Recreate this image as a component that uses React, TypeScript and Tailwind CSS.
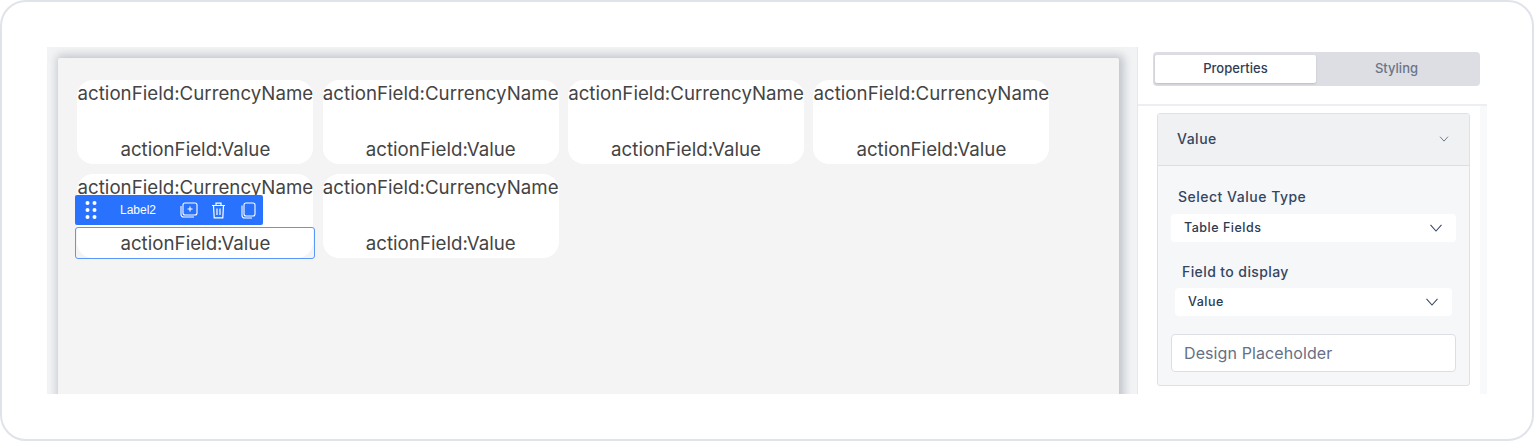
import React from "react";

const poppins = "font-['Inter','Liberation_Sans',sans-serif]";

function Chev({ size = 14, cls = "" }: { size?: number; cls?: string }) {
  return (
    <svg width={size} height={size} viewBox="0 0 14 14" fill="none" stroke="currentColor" strokeWidth="1.1" className={cls}>
      <path d="M1.5 3.8 7 10 12.5 3.8" />
    </svg>
  );
}

function Card() {
  return (
    <div className="w-[236px] h-[84px] bg-white rounded-[16px] flex flex-col justify-between items-center text-[#444] text-[18.7px] leading-[27px] tracking-[0.02px] whitespace-nowrap pb-[1px]">
      <div className="h-[27px]">actionField:CurrencyName</div>
      <div className="h-[27px]">actionField:Value</div>
    </div>
  );
}

function Toolbar() {
  return (
    <div className="absolute left-[17px] top-[137px] w-[188px] h-[30px] bg-[#2972fe] rounded-[2px] text-white flex items-center">
      <svg width="12" height="20" viewBox="0 0 12 20" fill="white" className="ml-[10px]">
        <circle cx="2.5" cy="3" r="2" /><circle cx="9.5" cy="3" r="2" />
        <circle cx="2.5" cy="10" r="2" /><circle cx="9.5" cy="10" r="2" />
        <circle cx="2.5" cy="17" r="2" /><circle cx="9.5" cy="17" r="2" />
      </svg>
      <span className="ml-[23px] text-[12px] leading-none w-[60px] font-['Liberation_Sans',sans-serif]">Label2</span>
      <svg width="18" height="16" viewBox="0 0 18 16" fill="none" stroke="white" strokeWidth="1.1">
        <rect x="3" y="1" width="14" height="12" rx="2" />
        <path d="M1 4v8.5A2.5 2.5 0 0 0 3.5 15H14" />
        <path d="M10 4.5v5M7.5 7h5" />
      </svg>
      <svg width="15" height="17" viewBox="0 0 15 17" fill="none" stroke="white" strokeWidth="1.2" className="ml-[13px]">
        <path d="M1 3.5h13M5 3.5V1.2h5v2.3M2.5 3.5l.7 12.3h8.6l.7-12.3M6 6.5v6.5M9 6.5v6.5" />
      </svg>
      <svg width="15" height="17" viewBox="0 0 15 17" fill="none" stroke="white" strokeWidth="1.1" className="ml-[15px]">
        <rect x="3" y="1" width="11" height="13" rx="2" />
        <path d="M1 3.5v10A2.5 2.5 0 0 0 3.5 16H11" />
      </svg>
    </div>
  );
}

function Select({ label, wide }: { label: string; wide?: boolean }) {
  return (
    <div className={`h-[28px] bg-white rounded-[4px] flex items-center justify-between text-[#2b3a52] text-[12.5px] font-[500] tracking-[0.5px] ${wide ? "pl-[13px] pr-[13px]" : "mx-[4px] pl-[13px] pr-[13px]"}`}>
      <span>{label}</span>
      <Chev cls="text-[#3b4a63]" />
    </div>
  );
}

export default function App() {
  return (
    <div className={`w-[1534px] h-[441px] bg-white border-2 border-[#e0e3e9] rounded-[26px] pt-[45px] pl-[45px] overflow-hidden ${poppins}`}>
      <div className="w-[1440px] h-[347px] flex overflow-hidden">
        <div className="w-[1090px] h-full bg-[#f2f3f4] pl-[11px] pt-[11px] pr-[18px]">
          <div className="relative h-[400px] bg-[#f4f4f4] rounded-[2px] pl-[19.4px] pt-[22px] shadow-[2px_0_8px_3px_rgba(120,130,145,0.4)]">
            <div className="flex flex-wrap gap-x-[9.33px] gap-y-[9.5px] w-[1000px]">
              <Card /><Card /><Card /><Card /><Card /><Card />
            </div>
            <Toolbar />
            <div className="absolute left-[17px] top-[169px] w-[240px] h-[32px] border border-[#5a97f8] rounded-[3px]" />
          </div>
        </div>
        <div className="w-[350px] h-full border-l border-[#e5e7eb] bg-white">
          <div className="h-[59px] pl-[15px] pt-[5px] border-b-2 border-[#eceef1]">
            <div className="w-[327px] h-[34px] bg-[#dcdee3] rounded-[4px] p-[3px] flex text-[13px] font-[450]">
              <div className="w-[161px] h-[28px] bg-white rounded-[2px] shadow-[0_1px_2px_rgba(0,0,0,0.15)] flex items-center justify-center text-[#2f3d55] -ml-[1px] tracking-[0.05px]">Properties</div>
              <div className="flex-1 flex items-center justify-center text-[#6b7588]">Styling</div>
            </div>
          </div>
          <div className="h-[288px] flex">
            <div className="w-[342px] pl-[19px] pt-[7px]">
              <div className="w-[313px] h-[273px] border border-[#dfe1e6] rounded-[3px] bg-[#f6f7f9] overflow-hidden">
                <div className="h-[52px] bg-[#f0f1f3] border-b border-[#dcdee3] flex items-center justify-between pl-[19px] pr-[20px] text-[#34465f] text-[14px] font-[450] tracking-[0.5px]">
                  <span className="-mt-[2px]">Value</span>
                  <Chev size={10} cls="text-[#4b5a70] -mt-[2px]" />
                </div>
                <div className="px-[13px] pt-[21px]">
                  <div className="pl-[7px] text-[14px] leading-[20px] font-[450] tracking-[0.5px] text-[#34465f] mb-[7px]">Select Value Type</div>
                  <Select label="Table Fields" wide />
                  <div className="pl-[11px] mt-[20px] text-[14px] leading-[20px] font-[450] tracking-[0.4px] text-[#34465f] mb-[6px]">Field to display</div>
                  <Select label="Value" />
                  <div className="mt-[18px] h-[38px] bg-white border border-[#dcdee3] rounded-[4px] flex items-center pl-[12px] text-[16px] tracking-[0.1px] text-[#667085]">Design Placeholder</div>
                </div>
              </div>
            </div>
            <div className="w-[7px] bg-[#f8f9fa]" />
          </div>
        </div>
      </div>
    </div>
  );
}
